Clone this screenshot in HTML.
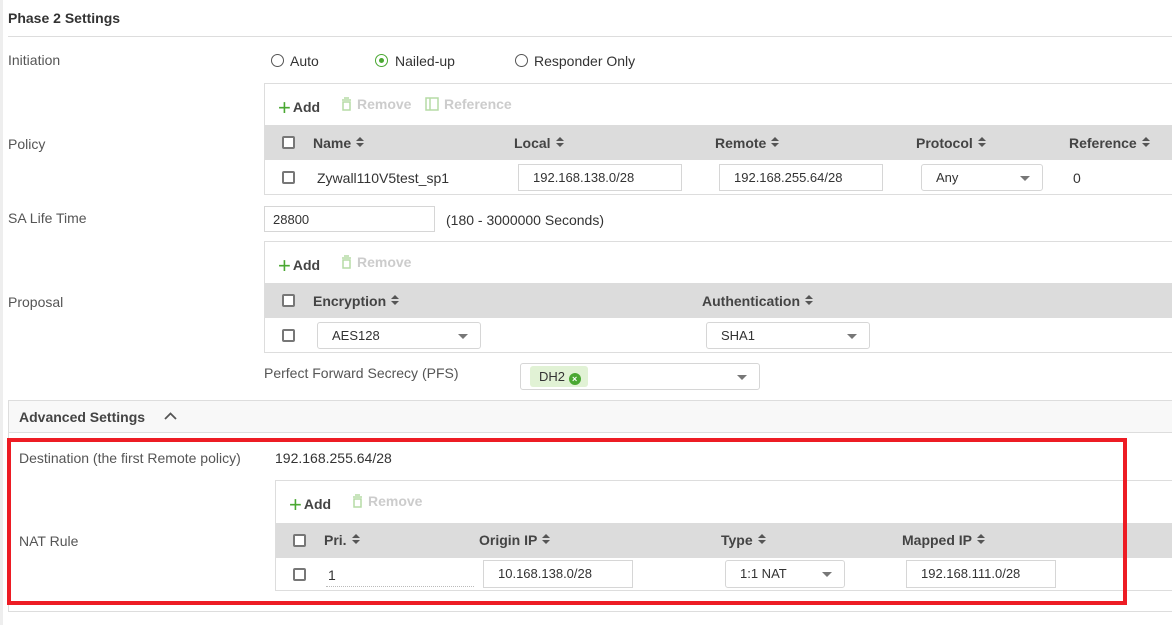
<!DOCTYPE html><html><head><style>
*{box-sizing:border-box;margin:0;padding:0}
body{width:1172px;height:625px;background:#fff;font-family:"Liberation Sans",sans-serif;font-size:14px;color:#333;position:relative;overflow:hidden}
.a{position:absolute;white-space:nowrap}
.lbl{color:#555}
.b{font-weight:bold;color:#444}
.box{position:absolute;border:1px solid #ddd;background:#fff}
.hd{position:absolute;background:#dcdcdc}
.cb{position:absolute;width:13px;height:13px;border:2px solid #777;border-radius:2px;background:#fff}
.in{position:absolute;border:1px solid #d6d6d6;background:#fff;font-size:13px;padding-left:14px;line-height:25px}
.sel{position:absolute;border:1px solid #d6d6d6;border-radius:3px;background:#fff;font-size:13px;padding-left:14px;line-height:25px}
.sel:after{content:"";position:absolute;right:12px;top:11px;border-left:5px solid transparent;border-right:5px solid transparent;border-top:5px solid #777}
.s{display:inline-block;width:8px;height:11px;margin-left:5px;vertical-align:0px;position:relative}
.s:before{content:"";position:absolute;left:0;top:0;border-left:4px solid transparent;border-right:4px solid transparent;border-bottom:4px solid #555}
.s:after{content:"";position:absolute;left:0;top:6px;border-left:4px solid transparent;border-right:4px solid transparent;border-top:4px solid #555}
.add{color:#444;font-weight:bold}
.add i{color:#4aa832;font-style:normal;font-size:22px;font-weight:normal;vertical-align:-3px;margin-right:2px}
.dis{color:#ccc;font-weight:bold}
.dis svg{vertical-align:-2px;margin-right:5px}
.rad{position:absolute;width:13px;height:13px;border:1.5px solid #555;border-radius:50%}
</style></head><body>
<div class="a" style="left:0;top:0;width:3px;height:625px;background:#eee"></div>
<div class="a b" style="left:8px;top:10px;font-size:14px;color:#333">Phase 2 Settings</div>
<div class="a" style="left:8px;top:36px;width:1164px;height:1px;background:#ddd"></div>

<div class="a lbl" style="left:8px;top:52px">Initiation</div>
<div class="rad" style="left:271px;top:54px"></div><div class="a" style="left:290px;top:53px">Auto</div>
<div class="rad" style="left:375px;top:54px;border-color:#4aa832"><div style="position:absolute;left:2.5px;top:2.5px;width:5px;height:5px;border-radius:50%;background:#4aa832"></div></div><div class="a" style="left:395px;top:53px">Nailed-up</div>
<div class="rad" style="left:515px;top:54px"></div><div class="a" style="left:534px;top:53px">Responder Only</div>

<div class="a lbl" style="left:8px;top:136px">Policy</div>
<div class="box" style="left:264px;top:83px;width:910px;height:112px"></div>
<div class="a add" style="left:278px;top:95px"><i>+</i>Add</div>
<div class="a dis" style="left:341px;top:96px"><svg width="11" height="14"><path d="M1 3h9M3 1h5M2 5h7v8H2z" fill="none" stroke="#b5dca5" stroke-width="1.5"/></svg>Remove</div>
<div class="a dis" style="left:425px;top:96px"><svg width="14" height="14"><path d="M1 1h12v12H1zM5 1v12" fill="none" stroke="#b5dca5" stroke-width="1.5"/></svg>Reference</div>
<div class="hd" style="left:265px;top:125px;width:907px;height:35px"></div>
<div class="cb" style="left:282px;top:136px"></div>
<div class="a b" style="left:313px;top:135px">Name<span class="s"></span></div>
<div class="a b" style="left:514px;top:135px">Local<span class="s"></span></div>
<div class="a b" style="left:715px;top:135px">Remote<span class="s"></span></div>
<div class="a b" style="left:916px;top:135px">Protocol<span class="s"></span></div>
<div class="a b" style="left:1069px;top:135px">Reference<span class="s"></span></div>
<div class="cb" style="left:282px;top:171px"></div>
<div class="a" style="left:317px;top:170px">Zywall110V5test_sp1</div>
<div class="in" style="left:518px;top:164px;width:164px;height:27px">192.168.138.0/28</div>
<div class="in" style="left:719px;top:164px;width:164px;height:27px">192.168.255.64/28</div>
<div class="sel" style="left:921px;top:164px;width:122px;height:27px">Any</div>
<div class="a" style="left:1073px;top:170px">0</div>

<div class="a lbl" style="left:8px;top:210px">SA Life Time</div>
<div class="in" style="left:264px;top:206px;width:171px;height:26px;padding-left:8px">28800</div>
<div class="a" style="left:446px;top:212px">(180 - 3000000 Seconds)</div>

<div class="a lbl" style="left:8px;top:294px">Proposal</div>
<div class="box" style="left:264px;top:241px;width:910px;height:112px"></div>
<div class="a add" style="left:278px;top:253px"><i>+</i>Add</div>
<div class="a dis" style="left:341px;top:254px"><svg width="11" height="14"><path d="M1 3h9M3 1h5M2 5h7v8H2z" fill="none" stroke="#b5dca5" stroke-width="1.5"/></svg>Remove</div>
<div class="hd" style="left:265px;top:283px;width:907px;height:35px"></div>
<div class="cb" style="left:282px;top:294px"></div>
<div class="a b" style="left:313px;top:293px">Encryption<span class="s"></span></div>
<div class="a b" style="left:702px;top:293px">Authentication<span class="s"></span></div>
<div class="cb" style="left:282px;top:329px"></div>
<div class="sel" style="left:317px;top:322px;width:164px;height:27px">AES128</div>
<div class="sel" style="left:706px;top:322px;width:164px;height:27px">SHA1</div>

<div class="a lbl" style="left:264px;top:365px">Perfect Forward Secrecy (PFS)</div>
<div class="sel" style="left:520px;top:363px;width:240px;height:27px"></div>
<div class="a" style="left:530px;top:366px;width:58px;height:21px;background:#e1f2d5;border-radius:3px;font-size:13px;line-height:21px;padding-left:9px">DH2 <span style="display:inline-block;width:12px;height:12px;border-radius:50%;background:#4aa832;color:#fff;font-size:9px;line-height:12px;text-align:center;vertical-align:-1px;font-weight:bold">×</span></div>

<div class="a" style="left:8px;top:400px;width:1166px;height:212px;border:1px solid #ddd"></div>
<div class="a" style="left:9px;top:401px;width:1163px;height:32px;background:#f8f8f8;border-bottom:1px solid #ddd"></div>
<div class="a b" style="left:19px;top:409px">Advanced Settings</div>
<svg class="a" style="left:164px;top:412px" width="13" height="8"><path d="M1 7L6.5 1.5 12 7" fill="none" stroke="#555" stroke-width="1.8"/></svg>

<div class="a lbl" style="left:19px;top:450px">Destination (the first Remote policy)</div>
<div class="a" style="left:275px;top:450px">192.168.255.64/28</div>
<div class="a lbl" style="left:19px;top:533px">NAT Rule</div>
<div class="box" style="left:275px;top:480px;width:899px;height:111px"></div>
<div class="a add" style="left:289px;top:492px"><i>+</i>Add</div>
<div class="a dis" style="left:352px;top:493px"><svg width="11" height="14"><path d="M1 3h9M3 1h5M2 5h7v8H2z" fill="none" stroke="#b5dca5" stroke-width="1.5"/></svg>Remove</div>
<div class="hd" style="left:276px;top:523px;width:896px;height:35px"></div>
<div class="cb" style="left:293px;top:534px"></div>
<div class="a b" style="left:324px;top:532px">Pri.<span class="s"></span></div>
<div class="a b" style="left:479px;top:532px">Origin IP<span class="s"></span></div>
<div class="a b" style="left:721px;top:532px">Type<span class="s"></span></div>
<div class="a b" style="left:902px;top:532px">Mapped IP<span class="s"></span></div>
<div class="cb" style="left:293px;top:568px"></div>
<div class="a" style="left:326px;top:567px;width:148px;height:20px;border-bottom:1px dotted #bbb;padding-left:2px">1</div>
<div class="in" style="left:483px;top:560px;width:150px;height:28px">10.168.138.0/28</div>
<div class="sel" style="left:725px;top:560px;width:120px;height:28px">1:1 NAT</div>
<div class="in" style="left:906px;top:560px;width:150px;height:28px">192.168.111.0/28</div>

<div class="a" style="left:7px;top:438px;width:1120px;height:167px;border:4px solid #ed1c24"></div>
</body></html>
